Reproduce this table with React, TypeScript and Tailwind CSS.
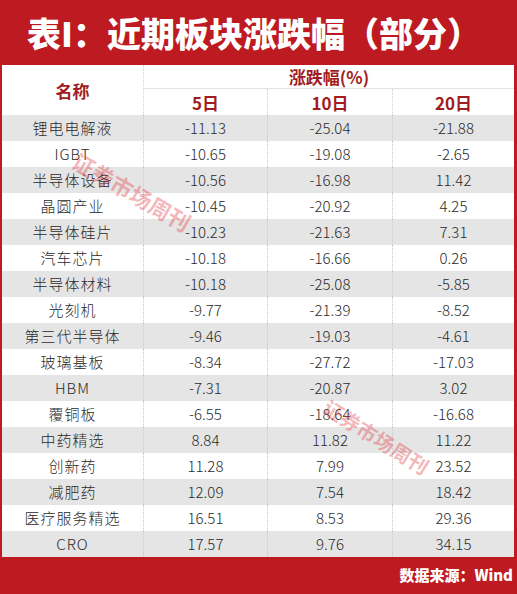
const rows: [string, string, string, string][] = [
  ["锂电电解液", "-11.13", "-25.04", "-21.88"],
  ["IGBT", "-10.65", "-19.08", "-2.65"],
  ["半导体设备", "-10.56", "-16.98", "11.42"],
  ["晶圆产业", "-10.45", "-20.92", "4.25"],
  ["半导体硅片", "-10.23", "-21.63", "7.31"],
  ["汽车芯片", "-10.18", "-16.66", "0.26"],
  ["半导体材料", "-10.18", "-25.08", "-5.85"],
  ["光刻机", "-9.77", "-21.39", "-8.52"],
  ["第三代半导体", "-9.46", "-19.03", "-4.61"],
  ["玻璃基板", "-8.34", "-27.72", "-17.03"],
  ["HBM", "-7.31", "-20.87", "3.02"],
  ["覆铜板", "-6.55", "-18.64", "-16.68"],
  ["中药精选", "8.84", "11.82", "11.22"],
  ["创新药", "11.28", "7.99", "23.52"],
  ["减肥药", "12.09", "7.54", "18.42"],
  ["医疗服务精选", "16.51", "8.53", "29.36"],
  ["CRO", "17.57", "9.76", "34.15"],
];

const cjk = { fontFamily: '"Noto Sans CJK SC", "Noto Sans", sans-serif' };

function App() {
  return (
    <div className="w-[517px] h-[594px] bg-[#bd1a21] flex flex-col overflow-hidden" style={cjk}>
      {/* title */}
      <div className="h-[65px] flex items-center pl-[27px] text-white text-[34px] font-black leading-none">
        表I：近期板块涨跌幅（部分）
      </div>

      {/* table */}
      <div className="relative ml-[2px] mr-[3px] bg-white">
        {/* header */}
        <div className="grid grid-cols-[142px_124px_125px_121px] text-[#a11c20] font-bold text-[17px] leading-none">
          <div className="row-span-2 h-[50px] flex items-center justify-center border-r border-dotted border-[#cfcfcf]">
            名称
          </div>
          <div className="col-span-3 h-[24px] flex items-center justify-center border-b border-[#e2e2e2]">
            涨跌幅(%)
          </div>
          <div className="h-[26px] flex items-center justify-center border-r border-dotted border-[#cfcfcf]">5日</div>
          <div className="h-[26px] flex items-center justify-center border-r border-dotted border-[#cfcfcf]">10日</div>
          <div className="h-[26px] flex items-center justify-center">20日</div>
        </div>

        {/* body */}
        {rows.map((r, i) => (
          <div
            key={r[0]}
            className={`grid grid-cols-[142px_124px_125px_121px] h-[26px] text-[15px] text-[#2a2a2a] font-light ${
              i % 2 === 0 ? "bg-[#e5e5e5]" : "bg-white"
            }`}
          >
            <div className="flex items-center justify-center tracking-[1px] border-r border-dotted border-[#c9c9c9]">{r[0]}</div>
            <div className="flex items-center justify-center border-r border-dotted border-[#c9c9c9]">{r[1]}</div>
            <div className="flex items-center justify-center border-r border-dotted border-[#c9c9c9]">{r[2]}</div>
            <div className="flex items-center justify-center">{r[3]}</div>
          </div>
        ))}

        {/* watermarks */}
        <div className="absolute left-[64px] top-[110px] rotate-[30deg] text-[22px] font-bold text-[#e0323c]/35 whitespace-nowrap pointer-events-none">
          证券市场周刊
        </div>
        <div className="absolute left-[314px] top-[357px] rotate-[32deg] text-[20px] font-bold text-[#e0323c]/35 whitespace-nowrap pointer-events-none">
          证券市场周刊
        </div>
      </div>

      {/* footer */}
      <div className="flex-1 flex items-center justify-end pr-[4px] text-white font-black text-[15px]">
        数据来源：Wind
      </div>
    </div>
  );
}

export default App;
